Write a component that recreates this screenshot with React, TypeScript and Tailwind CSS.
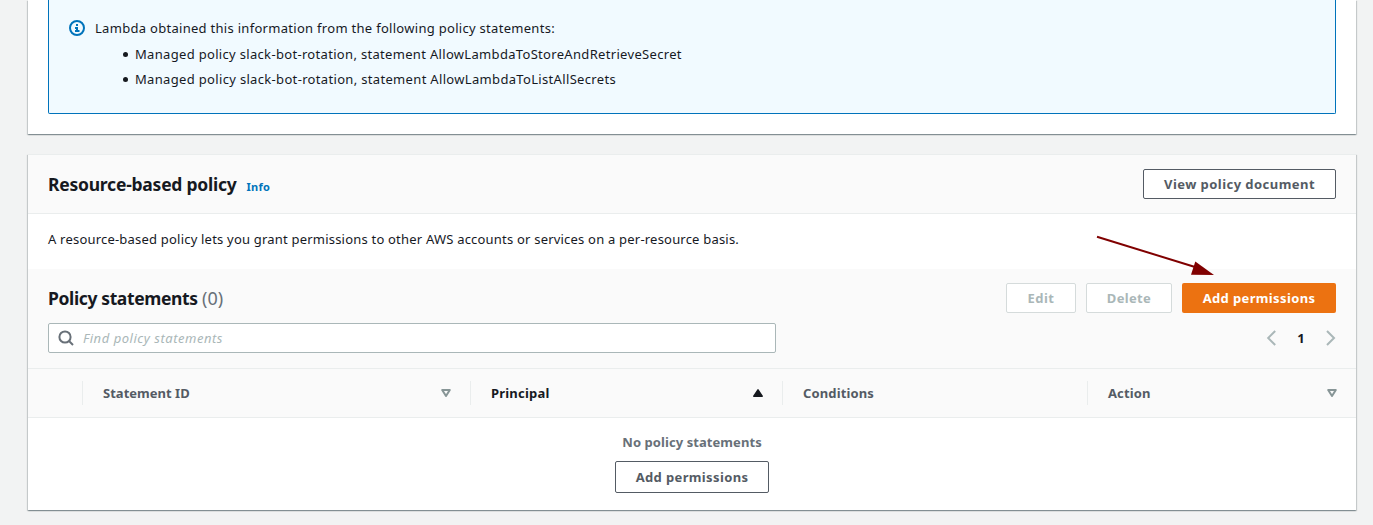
import React from "react";

const CARD =
  "shadow-[0_1px_1px_0_rgba(0,28,36,0.25),1px_1px_1px_0_rgba(0,28,36,0.15),-1px_1px_1px_0_rgba(0,28,36,0.15)]";
const BUTTON = "flex items-center justify-center rounded-[2px] border bg-white font-bold";

function InfoIcon() {
  return (
    <svg width="16" height="16" viewBox="0 0 16 16" fill="none" stroke="#0073bb" strokeWidth="2">
      <circle cx="8" cy="8" r="7" />
      <path d="M8 11V8H6M6 11h4.5M8 6V4" />
    </svg>
  );
}

function SearchIcon() {
  return (
    <svg width="16" height="16" viewBox="0 0 16 16" fill="none" stroke="#687078" strokeWidth="2">
      <circle cx="7" cy="7" r="5.6" />
      <path d="M15 15l-4-4" />
    </svg>
  );
}

function Chevron({ direction }: { direction: "left" | "right" }) {
  return (
    <svg width="10" height="16" viewBox="0 0 10 16" fill="none" stroke="#aab7b8" strokeWidth="2">
      <path d={direction === "left" ? "M9.2 1L2.2 8l7 7" : "M1 1l7 7-7 7"} />
    </svg>
  );
}

function SortIcon({ sorted }: { sorted?: boolean }) {
  return sorted ? (
    <svg width="10" height="8" viewBox="0 0 10 8">
      <path d="M5 .8L9.2 7.2H.8z" fill="#16191f" stroke="#16191f" strokeWidth="1.5" strokeLinejoin="round" />
    </svg>
  ) : (
    <svg width="10" height="8" viewBox="0 0 10 8">
      <path d="M1.2 1h7.6L5 7z" fill="none" stroke="#879596" strokeWidth="2" strokeLinejoin="round" />
    </svg>
  );
}

function Divider() {
  return <div className="h-6 w-px shrink-0 bg-[#eaeded]" />;
}

export default function App() {
  return (
    <div className="relative flex h-[525px] w-[1373px] flex-col overflow-hidden bg-[#f2f3f3] pr-[17px] pl-7 font-['Noto_Sans',sans-serif] text-[13px] leading-5 whitespace-nowrap text-[#16191f]">
      <section className={`${CARD} h-[134px] shrink-0 bg-white px-5`}>
        <div className="flex h-[114px] gap-[10px] rounded-b-[2px] border border-t-0 border-[#0073bb] bg-[#f1faff] pt-[18px] pl-5">
          <div className="pt-[2px]">
            <InfoIcon />
          </div>
          <div>
            <p className="tracking-[0.293px]">Lambda obtained this information from the following policy statements:</p>
            <ul className="mt-[6px] flex flex-col gap-[5px] pl-[28px]">
              <li className="flex items-center gap-[7px]">
                <span className="mt-px h-[5px] w-[5px] rounded-full bg-[#16191f]" />
                <span className="tracking-[0.32px]">
                  Managed policy slack-bot-rotation, statement AllowLambdaToStoreAndRetrieveSecret
                </span>
              </li>
              <li className="flex items-center gap-[7px]">
                <span className="mt-px h-[5px] w-[5px] rounded-full bg-[#16191f]" />
                <span className="tracking-[0.33px]">
                  Managed policy slack-bot-rotation, statement AllowLambdaToListAllSecrets
                </span>
              </li>
            </ul>
          </div>
        </div>
      </section>

      <section className={`${CARD} mt-5 flex h-[356px] shrink-0 flex-col border-t border-[#eaeded] bg-white`}>
        <header className="flex h-[59px] shrink-0 items-center justify-between border-b border-[#eaeded] bg-[#fafafa] px-5">
          <div className="flex items-baseline gap-[10px]">
            <h2 className="text-[17.5px] leading-6 font-bold tracking-[-0.23px]">Resource-based policy</h2>
            <a className="text-[11px] font-bold tracking-[0.2px] text-[#0073bb]">Info</a>
          </div>
          <button className={`${BUTTON} h-[30px] w-[193px] border-[#545b64] tracking-[0.45px] text-[#545b64]`}>
            View policy document
          </button>
        </header>

        <p className="h-[55px] shrink-0 pt-[15px] pl-5 tracking-[0.204px]">
          A resource-based policy lets you grant permissions to other AWS accounts or services on a per-resource basis.
        </p>

        <div className="flex h-[100px] shrink-0 flex-col border-b border-[#eaeded] bg-[#fafafa] px-5 pt-[14px]">
          <div className="flex h-[30px] items-center justify-between">
            <h2 className="text-[17.5px] leading-6 font-bold tracking-[-0.37px]">
              Policy statements{" "}
              <span className="text-[18px] font-normal tracking-[0.1px] text-[#687078]">(0)</span>
            </h2>
            <div className="flex gap-[10px]">
              <button className={`${BUTTON} h-[30px] w-[70px] border-[#d5dbdb] tracking-[0.5px] text-[#aab7b8]`}>
                Edit
              </button>
              <button className={`${BUTTON} h-[30px] w-[86px] border-[#d5dbdb] tracking-[0.35px] text-[#aab7b8]`}>
                Delete
              </button>
              <button className="h-[30px] w-[154px] rounded-[2px] bg-[#ec7211] font-bold tracking-[0.37px] text-white">
                Add permissions
              </button>
            </div>
          </div>
          <div className="mt-[10px] flex h-[30px] items-center justify-between">
            <div className="flex h-[30px] w-[728px] items-center gap-[9px] rounded-[2px] border border-[#aab7b8] bg-white pl-[9px]">
              <SearchIcon />
              <span className="tracking-[0.53px] text-[#aab7b8] italic">Find policy statements</span>
            </div>
            <div className="flex items-center">
              <Chevron direction="left" />
              <span className="w-[50px] text-center font-bold">1</span>
              <Chevron direction="right" />
            </div>
          </div>
        </div>

        <div className="flex h-[49px] shrink-0 items-center border-b border-[#eaeded] bg-[#fafafa] font-bold text-[#545b64]">
          <div className="w-[54px]" />
          <div className="flex w-[388px] items-center">
            <Divider />
            <span className="ml-5 flex-1 tracking-[0.02px]">Statement ID</span>
            <span className="mr-[19px]">
              <SortIcon />
            </span>
          </div>
          <div className="flex w-[312px] items-center">
            <Divider />
            <span className="ml-5 flex-1 tracking-[0.2px] text-[#16191f]">Principal</span>
            <span className="mr-[19px]">
              <SortIcon sorted />
            </span>
          </div>
          <div className="flex w-[305px] items-center">
            <Divider />
            <span className="ml-5 tracking-[0.13px]">Conditions</span>
          </div>
          <div className="flex flex-1 items-center">
            <Divider />
            <span className="ml-5 flex-1 tracking-[0.12px]">Action</span>
            <span className="mr-[19px]">
              <SortIcon />
            </span>
          </div>
        </div>

        <div className="flex flex-1 flex-col items-center pt-[14px]">
          <p className="font-bold tracking-[0.07px] text-[#687078]">No policy statements</p>
          <button className={`${BUTTON} mt-[9px] h-8 w-[154px] border-[#545b64] tracking-[0.37px] text-[#545b64]`}>
            Add permissions
          </button>
        </div>
      </section>

      <svg className="absolute top-[230px] left-[1090px]" width="130" height="50" viewBox="0 0 130 50">
        <path d="M7 6.7L105 37" stroke="#800000" strokeWidth="2" />
        <path d="M105.3 31.5L124 45L101 44.8z" fill="#800000" />
      </svg>
    </div>
  );
}
